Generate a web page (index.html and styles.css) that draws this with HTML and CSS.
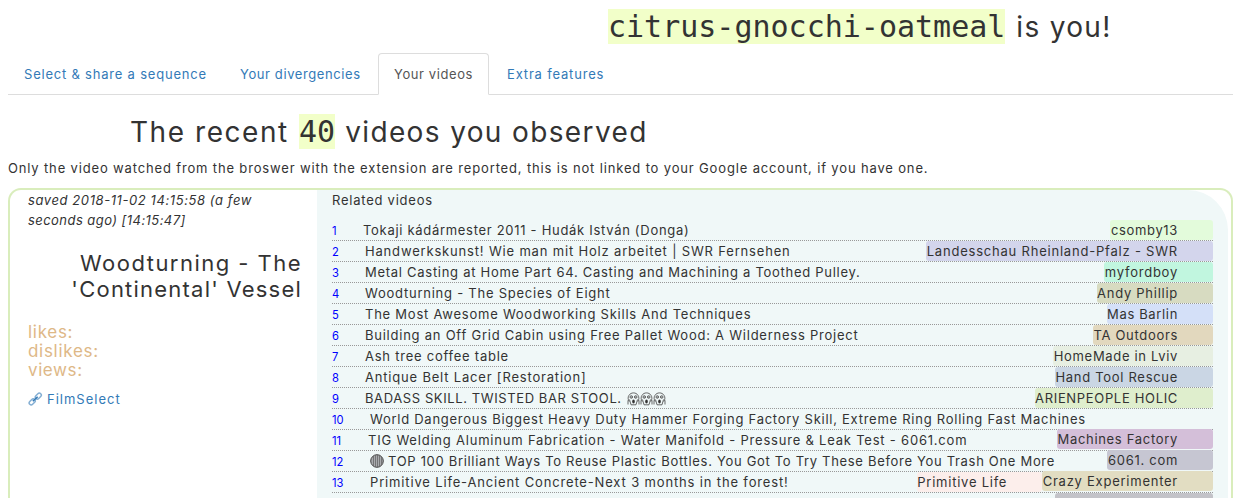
FILE: index.html
```html
<!DOCTYPE html>
<html lang="en">
<head>
<meta charset="utf-8">
<title>Your videos</title>
<link rel="stylesheet" href="styles.css">
</head>
<body>
<svg class="defs" width="0" height="0">
  <symbol id="scream" viewBox="0 0 13 14">
    <g fill="none" stroke="#444" stroke-width=".8">
      <path d="M2.200 9.500C.9 7.500.7 5 2 3.300C3 1.700 4.600.9 6.500.9S10 1.700 11 3.300C12.300 5 12.100 7.500 10.800 9.500"/>
      <circle cx="4.300" cy="5" r="1.300"/><circle cx="8.700" cy="5" r="1.300"/>
      <path d="M1 8.300V12.500M2.500 7.500L4 12.800M12 8.300V12.500M10.500 7.500L9 12.800M4 12.800H9"/>
    </g>
    <ellipse cx="6.500" cy="9.400" rx="1.300" ry="2" fill="#333"/>
    <circle cx="4.300" cy="5" r=".5" fill="#333"/><circle cx="8.700" cy="5" r=".5" fill="#333"/>
  </symbol>
</svg>
<header class="pseudo"><code>citrus-gnocchi-oatmeal</code><span>is you!</span></header>
<nav class="tabs">
  <a class="tab">Select &amp; share a sequence</a>
  <a class="tab">Your divergencies</a>
  <a class="tab active">Your videos</a>
  <a class="tab">Extra features</a>
</nav>
<h2 class="heading"><span class="lead">The recent</span><code>40</code><span>videos you observed</span></h2>
<p class="note">Only the video watched from the broswer with the extension are reported, this is not linked to your Google account, if you have one.</p>
<section class="card">
  <div class="meta">
    <div class="saved"><span>saved 2018-11-02 14:15:58 (a few</span><br><span class="ago">seconds ago) [14:15:47]</span></div>
    <h3 class="title"><span class="first">Woodturning - The</span><br><span>'Continental' Vessel</span></h3>
    <div class="stats"><div>likes:</div><div>dislikes:</div><div class="views">views:</div></div>
    <a class="source"><svg width="15" height="14" viewBox="0 0 15 14"><g fill="none" stroke="#337ab7"><g stroke-width="1.500" opacity=".6"><rect x="-3.400" y="-2" width="6.800" height="4" rx="2" transform="translate(4.200 9.900) rotate(-45)"/><rect x="-3.400" y="-2" width="6.800" height="4" rx="2" transform="translate(10.300 4.100) rotate(-45)"/></g><path stroke-width="1.500" d="M4.800 9.300L9.700 4.700"/></g></svg><span>FilmSelect</span></a>
  </div>
  <div class="related">
    <div class="label">Related videos</div>
    <ol class="list">
      <li><i>1</i><b>Tokaji kádármester 2011 - Hudák István (Donga)</b><em>csomby13</em></li>
      <li><i>2</i><b>Handwerkskunst! Wie man mit Holz arbeitet | SWR Fernsehen</b><em>Landesschau Rheinland-Pfalz - SWR</em></li>
      <li><i>3</i><b>Metal Casting at Home Part 64. Casting and Machining a Toothed Pulley.</b><em>myfordboy</em></li>
      <li><i>4</i><b>Woodturning - The Species of Eight</b><em>Andy Phillip</em></li>
      <li><i>5</i><b>The Most Awesome Woodworking Skills And Techniques</b><em>Mas Barlin</em></li>
      <li><i>6</i><b>Building an Off Grid Cabin using Free Pallet Wood: A Wilderness Project</b><em>TA Outdoors</em></li>
      <li><i>7</i><b>Ash tree coffee table</b><em>HomeMade in Lviv</em></li>
      <li><i>8</i><b>Antique Belt Lacer [Restoration]</b><em>Hand Tool Rescue</em></li>
      <li><i>9</i><b>BADASS SKILL. TWISTED BAR STOOL.</b><span class="faces"><svg><use href="#scream"/></svg><svg><use href="#scream"/></svg><svg><use href="#scream"/></svg></span><em>ARIENPEOPLE HOLIC</em></li>
      <li><i>10</i><b>World Dangerous Biggest Heavy Duty Hammer Forging Factory Skill, Extreme Ring Rolling Fast Machines</b></li>
      <li><i>11</i><b>TIG Welding Aluminum Fabrication - Water Manifold - Pressure &amp; Leak Test - 6061.com</b><em class="raised">Machines Factory</em></li>
      <li><i>12</i><svg class="disc" viewBox="0 0 14 14"><circle cx="7" cy="7" r="6.300" fill="#a9abae" stroke="#444"/><path d="M3.500 2v10M5.500 1v12M7.500 1v12M9.500 1v12M11.500 3v8" stroke="#666" stroke-width=".8"/></svg><b>TOP 100 Brilliant Ways To Reuse Plastic Bottles. You Got To Try These Before You Trash One More</b><em class="raised">6061. com</em></li>
      <li><i>13</i><b>Primitive Life-Ancient Concrete-Next 3 months in the forest!</b><em class="under">Primitive Life</em><em class="raised crazy">Crazy Experimenter</em></li>
      <li class="cut"><em class="blank"></em></li>
    </ol>
  </div>
</section>
</body>
</html>
```
FILE: styles.css
```css
* { box-sizing: border-box; }
html, body { height: 498px; overflow: hidden; }
body {
  margin: 0;
  padding: 9px 0 0 8px;
  width: 1233px;
  background: #fff;
  color: #333;
  font: 13px/20px Inter, "Open Sans", sans-serif;
  letter-spacing: .76px;
}
.defs { position: absolute; }
.pseudo, .heading {
  display: flex;
  height: 35px;
  margin: 0;
  font-size: 28px;
  font-weight: 400;
  line-height: 37px;
  white-space: nowrap;
}
.pseudo { padding-left: 600px; letter-spacing: 1.3px; }
.pseudo span { margin-left: 11px; }
code {
  font: 30px/35px "DejaVu Sans Mono", monospace;
  letter-spacing: 0;
  background: #f2ffc9;
}
.tabs { display: flex; gap: 2px; height: 42px; margin-top: 9px; border-bottom: 1px solid #ddd; }
.tab {
  height: 42px;
  padding: 11px 14px 10px 16px;
  color: #337ab7;
  white-space: nowrap;
}
.tab:nth-child(1) { width: 214px; letter-spacing: .79px; }
.tab:nth-child(2) { width: 152px; letter-spacing: .6px; }
.tab:nth-child(3) { width: 111px; letter-spacing: .59px; }
.tab:nth-child(4) { letter-spacing: .82px; }
.tab.active {
  padding: 10px 14px 10px 15px;
  color: #555;
  background: #fff;
  border: 1px solid #ddd;
  border-bottom-color: #fff;
  border-radius: 4px 4px 0 0;
}
.heading { margin-top: 19px; padding-left: 122px; letter-spacing: 1.37px; }
.heading .lead { width: 169px; letter-spacing: 1.55px; }
.heading span:last-child { margin-left: 10px; }
.note { margin: 9px 0 10px; white-space: nowrap; letter-spacing: .845px; }
.card {
  display: flex;
  height: 310px;
  overflow: hidden;
  border: 2px solid #d9edbc;
  border-bottom: 0;
  border-radius: 13px 13px 0 0;
}
.meta { width: 307px; padding: 0 15px 0 18px; white-space: nowrap; }
.saved { font-style: italic; letter-spacing: .59px; }
.ago { letter-spacing: .45px; }
.title {
  margin: 20px 0 21px;
  font-size: 22px;
  font-weight: 400;
  line-height: 26px;
  letter-spacing: 1.22px;
  text-align: right;
}
.first { letter-spacing: 1.47px; }
.stats { color: #deb887; font-size: 17px; line-height: 19px; letter-spacing: .7px; }
.views { letter-spacing: .6px; }
.source { display: flex; align-items: center; gap: 4px; margin-top: 9px; color: #337ab7; letter-spacing: 1px; }
.related {
  width: 911px;
  padding: 0 15px;
  background: #f0f8f8;
  border-radius: 0 40px 0 0;
}
.list { margin: 10px 0 0; padding: 0; list-style: none; }
.list li {
  display: flex;
  height: 21px;
  border-bottom: 1px dotted #999;
  white-space: nowrap;
}
.list .cut { height: 5px; border-bottom: 0; }
.list i {
  flex: none;
  width: 33px;
  padding-top: 1px;
  color: #00f;
  font-size: 11.200px;
  font-style: normal;
  letter-spacing: 0;
}
.list b { font-weight: 400; }
.list em {
  margin-left: auto;
  height: 20px;
  padding: 0 35px 0 .5px;
  border-radius: 3px;
  font-style: normal;
}
.list .raised { position: relative; top: -1px; }
.list li:nth-child(n+10) i { width: 38px; }
.list li:nth-child(1) i { width: 31px; }
.list li:nth-child(11) i { width: 36px; }
.faces { display: flex; margin-left: 5px; padding-top: 4px; }
.faces svg { width: 13px; height: 14px; }
.disc { width: 14px; height: 14px; margin: 3px 4px 0 0; }

.list li:nth-child(1) b { letter-spacing: .7px; }
.list li:nth-child(2) b { letter-spacing: .825px; }
.list li:nth-child(3) b { letter-spacing: .72px; }
.list li:nth-child(8) b { letter-spacing: .81px; }
.list li:nth-child(9) b { letter-spacing: .6px; }
.list li:nth-child(10) b { letter-spacing: .74px; }
.list li:nth-child(11) b { letter-spacing: .79px; }
.list li:nth-child(12) b { letter-spacing: .685px; }
.list li:nth-child(13) b { letter-spacing: .845px; }

.list li:nth-child(1) em { background: #e3fbdb; letter-spacing: .65px; }
.list li:nth-child(2) em { background: #d3d5ec; letter-spacing: .79px; }
.list li:nth-child(3) em { background: #c1f6df; }
.list li:nth-child(4) em { background: #d7dbc1; letter-spacing: .73px; }
.list li:nth-child(5) em { background: #d4e0f8; letter-spacing: .65px; }
.list li:nth-child(6) em { background: #e2d8be; letter-spacing: .68px; }
.list li:nth-child(7) em { background: #e7efe2; letter-spacing: .68px; }
.list li:nth-child(8) em { background: #cad6e4; letter-spacing: .7px; }
.list li:nth-child(9) em { background: #dfeecd; letter-spacing: .67px; }
.list li:nth-child(11) em { background: #d4bfd9; letter-spacing: .69px; }
.list li:nth-child(12) em { background: #c6c6d2; letter-spacing: .71px; }
.list .under { background: #fceeeb; }
.list li:nth-child(13) .crazy { margin-left: 0; background: #e2ddc2; letter-spacing: .75px; }
.list .blank { width: 158px; height: 5px; background: #c3c3c8; border-radius: 3px 3px 0 0; }
```
